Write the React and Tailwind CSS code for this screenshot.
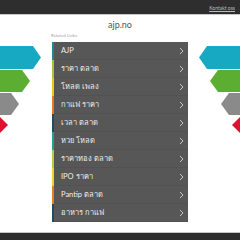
const links = [
  { label: "AJP", accent: "bg-[#1a8a8c]" },
  { label: "ราคา ตลาด", accent: "bg-[#a9c23b]" },
  { label: "โหลด เพลง", accent: "bg-[#f0c419]" },
  { label: "กาแฟ ราคา", accent: "bg-[#e87722]" },
  { label: "เวลา ตลาด", accent: "bg-[#1d4e63]" },
  { label: "หวย โหลด", accent: "bg-[#1fa38a]" },
  { label: "ราคาทอง ตลาด", accent: "bg-[#b3cf3c]" },
  { label: "IPO ราคา", accent: "bg-[#f3d02c]" },
  { label: "Pantip ตลาด", accent: "bg-[#ea7a24]" },
  { label: "อาหาร กาแฟ", accent: "bg-[#1e4a66]" },
];

function Arrows({ flip }) {
  return (
    <svg
      width="52"
      height="90"
      viewBox="0 0 52 90"
      className={flip ? "-scale-x-100" : ""}
    >
      <polygon points="0,0 33,0 41,11.5 33,23 0,23" fill="#17a9c1" />
      <polygon points="0,24 22,24 30,35 22,46 0,46" fill="#5bae32" />
      <polygon points="0,47 11,47 19,58 11,69 0,69" fill="#8a8a8a" />
      <polygon points="0,71 0,71 8,79 0,87" fill="#e0102f" />
    </svg>
  );
}

function Chevron() {
  return (
    <svg width="5" height="8" viewBox="0 0 5 8">
      <polyline
        points="1,1 4,4 1,7"
        fill="none"
        stroke="#d0d0d0"
        strokeWidth="0.9"
      />
    </svg>
  );
}

export default function App() {
  return (
    <div className="min-h-[250px] bg-white font-['Lato','Noto_Sans',sans-serif]">
      {/* TOP BAR */}
      <div className="flex h-[15px] items-end justify-end border-b border-[#c8c8c8] bg-[#2e2e2e] px-[5px] pb-[3px]">
        <a className="text-[5px] leading-none text-[#bdbdbd] underline">
          Kontakt oss
        </a>
      </div>

      {/* DOMAIN */}
      <div className="flex h-[19px] items-center justify-center pt-[1px] text-[9px] text-[#555]">
        ajp.no
      </div>

      <div className="flex h-[8px] items-start pl-[51px] text-[4.5px] leading-none text-[#a0a0a0]">
        Related Links
      </div>

      {/* MAIN */}
      <div className="flex">
        <div className="w-[52px] pt-[4px]">
          <Arrows />
        </div>

        <div className="w-[136px] bg-[#575757]">
          {links.map((l) => (
            <div key={l.label} className="flex h-[18px] items-stretch">
              <div className={`w-[2px] ${l.accent}`}></div>
              <div className="flex flex-1 items-center justify-between border-b border-[#525252] pl-[7px] pr-[4px]">
                <span className="text-[7.5px] text-[#eeeeee]">{l.label}</span>
                <Chevron />
              </div>
            </div>
          ))}
        </div>

        <div className="w-[52px] pt-[4px]">
          <Arrows flip />
        </div>
      </div>

      {/* FOOTER */}
      <div className="mt-[10px] h-[20px] border-t border-[#c8c8c8] bg-[#2e2e2e]"></div>
    </div>
  );
}
